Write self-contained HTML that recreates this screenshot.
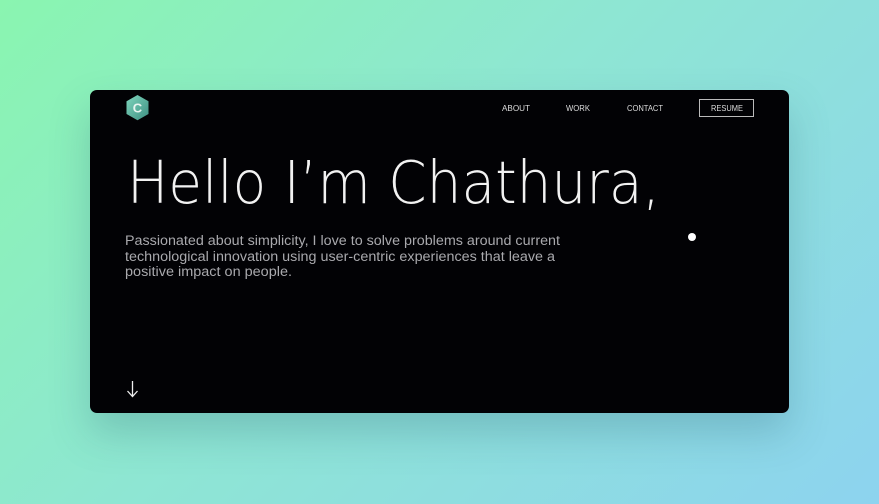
<!DOCTYPE html>
<html><head><meta charset="utf-8"><style>
html,body{margin:0;padding:0;width:879px;height:504px;overflow:hidden;}
body{background:linear-gradient(135deg,#8af5b0 0%,#8ee6d3 45%,#8dd3ef 100%);font-family:"Liberation Sans",sans-serif;position:relative;}
.card{position:absolute;left:90px;top:90px;width:699px;height:323px;background:#020205;border-radius:7px;box-shadow:0 20px 40px rgba(40,90,110,.25);}
svg{position:absolute;left:0;top:0;}
</style></head><body>
<div class="card"></div>
<svg width="879" height="504">
<defs><linearGradient id="g" x1="0" y1="0" x2="1" y2="1"><stop offset="0" stop-color="#7fd6bd"/><stop offset="1" stop-color="#3d8f82"/></linearGradient></defs>
<polygon points="137.5,95 148.5,101.3 148.5,114 137.5,120.3 126.5,114 126.5,101.3" fill="url(#g)"/>
<text x="137.5" y="112.5" text-anchor="middle" font-family="Liberation Sans" font-weight="bold" font-size="13" fill="#e8f5f1">C</text>
<g font-family="Liberation Sans" font-size="8.5" fill="#ddd">
<text x="502" y="111" textLength="28" lengthAdjust="spacingAndGlyphs">ABOUT</text>
<text x="566" y="111" textLength="24" lengthAdjust="spacingAndGlyphs">WORK</text>
<text x="627" y="111" textLength="36" lengthAdjust="spacingAndGlyphs">CONTACT</text>
<text x="711" y="111" textLength="32" lengthAdjust="spacingAndGlyphs">RESUME</text>
</g>
<rect x="699.5" y="99.5" width="54" height="17" fill="none" stroke="#bbb" stroke-width="1"/>
<text x="127" y="203" font-family="DejaVu Sans" font-weight="200" font-size="59" fill="#f2f2f2" textLength="533" lengthAdjust="spacingAndGlyphs">Hello I’m Chathura,</text>
<g font-family="Liberation Sans" font-size="13.5" fill="#a9a9ad">
<text x="125" y="245" textLength="435" lengthAdjust="spacingAndGlyphs">Passionated about simplicity, I love to solve problems around current</text>
<text x="125" y="261" textLength="430" lengthAdjust="spacingAndGlyphs">technological innovation using user-centric experiences that leave a</text>
<text x="125" y="276" textLength="167" lengthAdjust="spacingAndGlyphs">positive impact on people.</text>
</g>
<circle cx="692" cy="237" r="4" fill="#fff"/>
<path d="M132.5 381 V396 M127.5 391 L132.5 396.5 L137.5 391" stroke="#eee" stroke-width="1.3" fill="none"/>
</svg>
</body></html>
